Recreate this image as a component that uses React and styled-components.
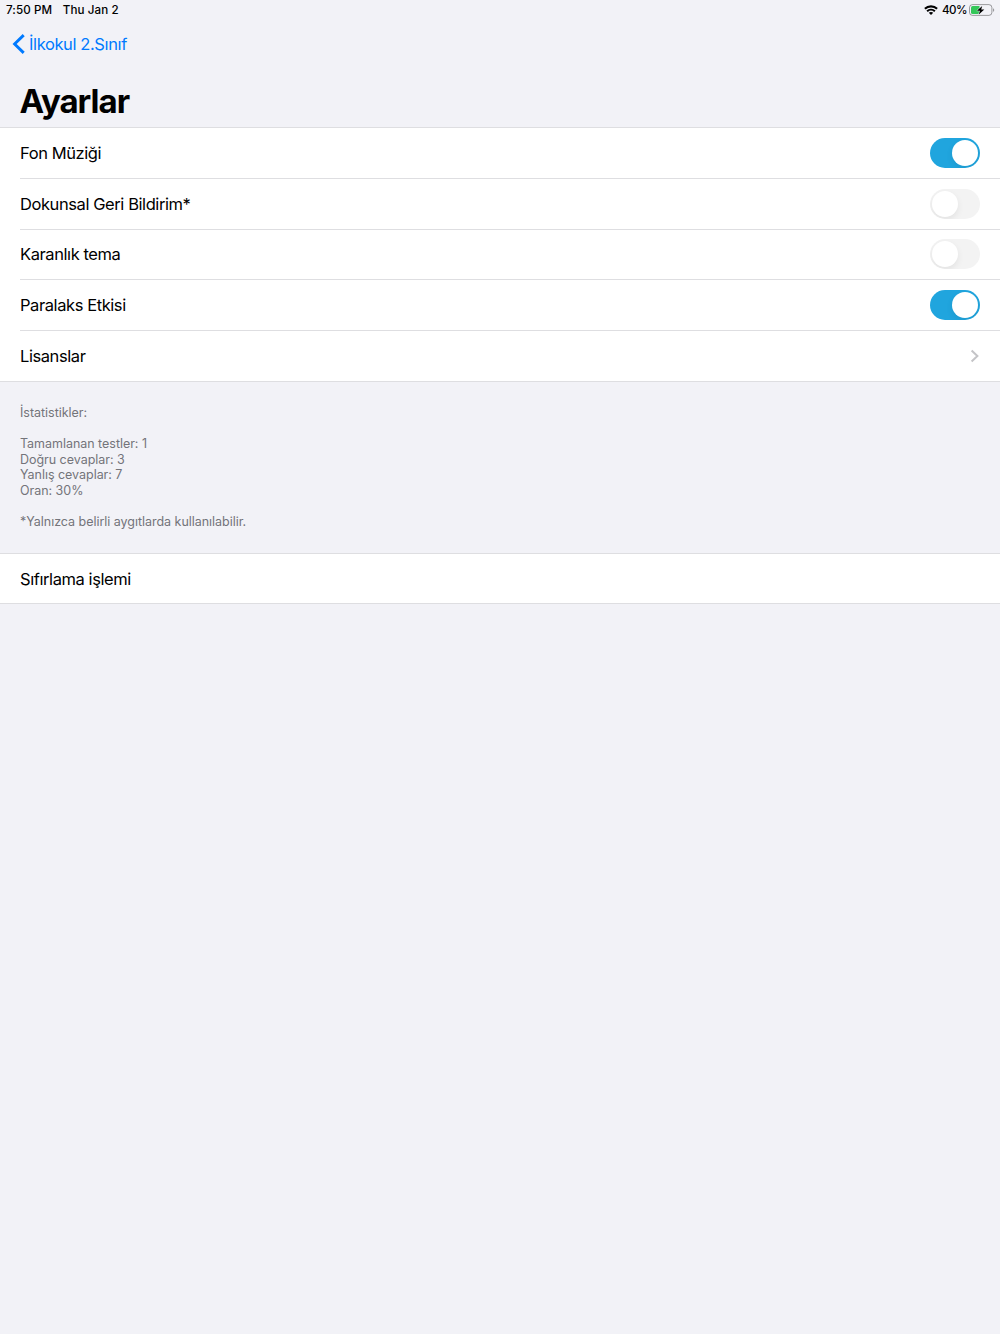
import { useState } from "react";

import styled, { createGlobalStyle } from "styled-components";

const SWITCHES = [
  { id: "music", label: "Fon Müziği", on: true },
  { id: "haptic", label: "Dokunsal Geri Bildirim*", on: false },
  { id: "dark", label: "Karanlık tema", on: false },
  { id: "parallax", label: "Paralaks Etkisi", on: true },
];

function StatusBar() {
  return (
    <StatusBarStyle>
      <StatusText>7:50 PM</StatusText>
      <StatusText>Thu Jan 2</StatusText>
      <StatusIcons>
        <svg width="14" height="10" viewBox="0 0 14 10">
          <g fill="none" stroke="#000" strokeWidth="2.1">
            <path d="M0.9 3.8C4.2 0.6 9.8 0.6 13.1 3.8" />
            <path d="M3.1 6.2C5.3 4.2 8.7 4.2 10.9 6.2" />
          </g>
          <path d="M4.8 7.8C6 6.8 8 6.8 9.2 7.8L7 10Z" />
        </svg>
        <BatteryText>40%</BatteryText>
        <svg width="26" height="12" viewBox="0 0 26 12">
          <rect x="0.5" y="0.6" width="22.4" height="10.8" rx="3" fill="none" stroke="#000" strokeOpacity="0.36" />
          <path d="M24.2 4.2C25.5 4.7 25.5 7.3 24.2 7.8Z" fillOpacity="0.45" />
          <path d="M3.6 2H10.5V10H3.6A1.7 1.7 0 0 1 2 8.4V3.6A1.7 1.7 0 0 1 3.6 2Z" fill="#34c759" />
          <path
            d="M13.2 1.9L7.9 6.7H10.9L9.8 10.4L15.3 5.4H12.2Z"
            stroke="#f2f2f7"
            strokeWidth="1"
            paintOrder="stroke"
          />
        </svg>
      </StatusIcons>
    </StatusBarStyle>
  );
}

export default function App() {
  const [settings, setSettings] = useState(SWITCHES);

  function toggle(id) {
    setSettings(
      settings.map((item) => (item.id === id ? { ...item, on: !item.on } : item))
    );
  }

  return (
    <Screen>
      <GlobalStyle />
      <StatusBar />
      <BackButton>
        <svg width="13" height="22" viewBox="0 0 13 22">
          <path d="M11.7 2.1L2.6 11L11.7 19.9" fill="none" stroke="#007aff" strokeWidth="2.9" />
        </svg>
        <span>İlkokul 2.Sınıf</span>
      </BackButton>
      <Title>Ayarlar</Title>
      <List>
        {settings.map((item) => (
          <Row key={item.id}>
            <Label>{item.label}</Label>
            <Switch
              role="switch"
              aria-checked={item.on}
              aria-label={item.label}
              $on={item.on}
              onClick={() => toggle(item.id)}
            >
              <Knob />
            </Switch>
          </Row>
        ))}
        <Row $last>
          <Label>Lisanslar</Label>
          <Chevron width="9" height="14" viewBox="0 0 9 14">
            <path d="M1.6 1.5L7.4 7L1.6 12.5" fill="none" stroke="#c4c4c7" strokeWidth="2" />
          </Chevron>
        </Row>
      </List>
      <Stats>
        <p>İstatistikler:</p>
        <StatsGroup>
          <p>Tamamlanan testler: 1</p>
          <p>Doğru cevaplar: 3</p>
          <p>Yanlış cevaplar: 7</p>
          <p>Oran: 30%</p>
        </StatsGroup>
        <p>*Yalnızca belirli aygıtlarda kullanılabilir.</p>
      </Stats>
      <List>
        <Row $last $height="50.2px">
          <Label>Sıfırlama işlemi</Label>
        </Row>
      </List>
    </Screen>
  );
}

const GlobalStyle = createGlobalStyle`
  * {
    box-sizing: border-box;
  }
  body {
    margin: 0;
    background: #f2f2f7;
  }
  p {
    margin: 0;
  }
  svg {
    display: block;
    flex-shrink: 0;
  }
`;

const Screen = styled.div`
  min-height: 100vh;
  background: #f2f2f7;
  color: #000;
  font-family: Inter, "Liberation Sans", sans-serif;
`;

const StatusBarStyle = styled.div`
  height: 20px;
  padding: 0 5px 0 6px;
  display: flex;
  align-items: center;
  gap: 10.5px;
`;

const StatusText = styled.span`
  font-size: 11.6px;
  line-height: 20px;
  font-weight: 500;
  letter-spacing: 0.1px;
`;

const StatusIcons = styled.div`
  margin-left: auto;
  display: flex;
  align-items: center;
`;

const BatteryText = styled(StatusText)`
  margin: 0 2px 0 4px;
  letter-spacing: -0.5px;
`;

const BackButton = styled.button`
  height: 48px;
  padding: 0 0 0 12px;
  display: flex;
  align-items: center;
  gap: 4px;
  border: 0;
  background: none;
  color: #007aff;
  font-family: inherit;
  font-size: 16.5px;
  line-height: 20px;
  letter-spacing: -0.39px;
`;

const Title = styled.h1`
  height: 59px;
  margin: 0;
  padding: 13px 20px 0 19.5px;
  font-size: 33px;
  line-height: 40px;
  font-weight: 700;
  letter-spacing: -1px;
`;

const List = styled.div`
  background: #fff;
  border-top: 1px solid #dedee1;
`;

const Row = styled.div`
  height: ${({ $height }) => $height || "50.8px"};
  margin-left: ${({ $last }) => ($last ? "0" : "20px")};
  padding: 0 20px 0 ${({ $last }) => ($last ? "20px" : "0")};
  display: flex;
  align-items: center;
  justify-content: space-between;
  border-bottom: 1px solid #dedee1;
`;

const Label = styled.span`
  font-size: 16.5px;
  line-height: 20px;
  letter-spacing: -0.42px;
`;

const Switch = styled.button`
  width: 50px;
  height: 30px;
  padding: 2px;
  display: flex;
  justify-content: ${({ $on }) => ($on ? "flex-end" : "flex-start")};
  border: 0;
  border-radius: 15px;
  background: ${({ $on }) => ($on ? "#20a5de" : "#f3f3f3")};
  overflow: hidden;
`;

const Knob = styled.span`
  width: 26px;
  height: 26px;
  border-radius: 50%;
  background: #fff;
  box-shadow: 0 3px 7px rgba(0, 0, 0, 0.07);
`;

const Chevron = styled.svg`
  margin-right: 1px;
`;

const Stats = styled.div`
  height: 171.2px;
  padding: 22.8px 20px 0;
  color: #74747a;
  font-size: 12.5px;
  line-height: 15.6px;
  letter-spacing: -0.03px;
`;

const StatsGroup = styled.div`
  padding: 15.6px 0;
`;
